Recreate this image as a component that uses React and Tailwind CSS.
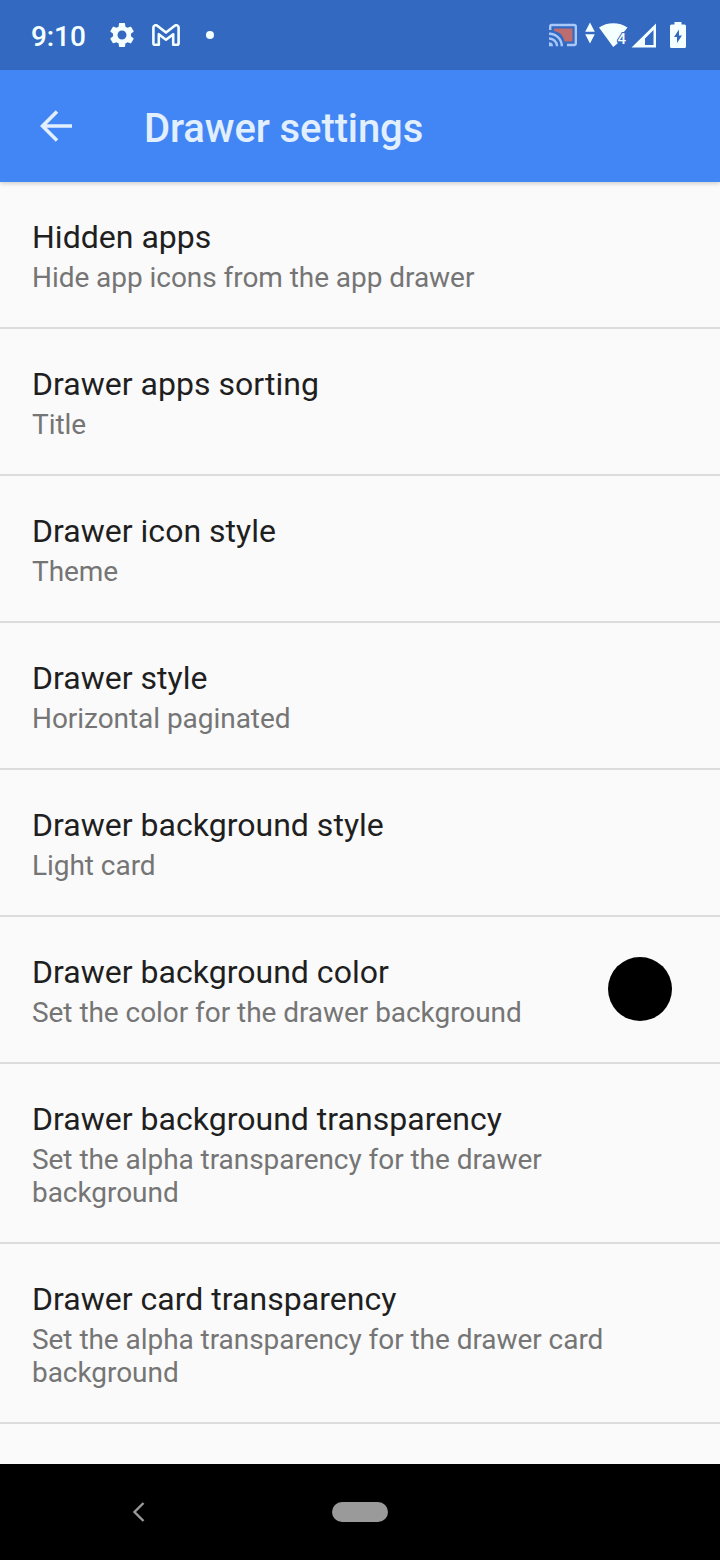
import React from "react";

const settings = [
  { title: "Hidden apps", summary: "Hide app icons from the app drawer" },
  { title: "Drawer apps sorting", summary: "Title" },
  { title: "Drawer icon style", summary: "Theme" },
  { title: "Drawer style", summary: "Horizontal paginated" },
  { title: "Drawer background style", summary: "Light card" },
  { title: "Drawer background color", summary: "Set the color for the drawer background", swatch: true },
  { title: "Drawer background transparency", summary: "Set the alpha transparency for the drawer background" },
  { title: "Drawer card transparency", summary: "Set the alpha transparency for the drawer card background" },
];

function StatusBar() {
  return (
    <div className="h-[70px] shrink-0 bg-[#3469c1] flex items-center justify-between pl-[31px] pr-[34px] text-[#f4ffff]">
      <div className="flex items-center">
        <span className="w-[76px] pt-1 text-[28px] leading-[34px] tracking-[-0.1px] font-medium">9:10</span>
        <svg className="w-[30px] h-[30px]" viewBox="0 0 24 24" fill="currentColor">
          <path d="M19.14 12.94c.04-.3.06-.61.06-.94 0-.32-.02-.64-.07-.94l2.03-1.58c.18-.14.23-.41.12-.61l-1.92-3.32c-.12-.22-.37-.29-.59-.22l-2.39.96c-.5-.38-1.03-.7-1.62-.94l-.36-2.54c-.04-.24-.24-.41-.48-.41h-3.84c-.24 0-.43.17-.47.41l-.36 2.54c-.59.24-1.13.57-1.62.94l-2.39-.96c-.22-.08-.47 0-.59.22L2.74 8.87c-.12.21-.08.47.12.61l2.03 1.58c-.05.3-.09.63-.09.94s.02.64.07.94l-2.03 1.58c-.18.14-.23.41-.12.61l1.92 3.32c.12.22.37.29.59.22l2.39-.96c.5.38 1.03.7 1.62.94l.36 2.54c.05.24.24.41.48.41h3.84c.24 0 .44-.17.47-.41l.36-2.54c.59-.24 1.13-.56 1.62-.94l2.39.96c.22.08.47 0 .59-.22l1.92-3.32c.12-.22.07-.47-.12-.61l-2.01-1.58zM12 15.6c-1.98 0-3.6-1.62-3.6-3.6s1.62-3.6 3.6-3.6 3.6 1.62 3.6 3.6-1.62 3.6-3.6 3.6z" />
        </svg>
        <svg className="w-[28px] h-[22px] ml-[15px]" viewBox="0 0 28 22" fill="none" stroke="currentColor" strokeWidth="2.6" strokeLinejoin="round">
          <path d="M1.4 3.6C1.4 1.2 3.8.6 5.6 2L14 8.600l8.400-6.600C24.200.6 26.600 1.200 26.600 3.600V19.200a1.500 1.500 0 0 1-1.500 1.500H21.200V10.200L14 15.700l-7.200-5.500v10.500H2.900a1.500 1.500 0 0 1-1.500-1.500z" />
        </svg>
        <div className="w-2 h-2 rounded-full bg-current ml-[26px]" />
      </div>

      <div className="flex items-center">
        <svg className="w-[28px] h-[24px]" viewBox="0 0 28 24">
          <path d="M5 5.500h18.500v13H15.500C14.500 12.500 10.500 8.800 5 8z" fill="#bd6c70" />
          <g fill="none" stroke="#a9c8fa" strokeWidth="2.400">
            <path d="M1.200 7V3.500A1.500 1.500 0 0 1 2.700 2h22.600a1.500 1.500 0 0 1 1.500 1.500v17a1.500 1.500 0 0 1-1.500 1.500H18" />
            <path d="M0 10.700A12.500 12.500 0 0 1 12.800 23.200M0 15.500A7.800 7.800 0 0 1 8 23.200" />
          </g>
          <path d="M0 19.300a4 4 0 0 1 4 4H0z" fill="#a9c8fa" />
        </svg>
        <svg className="w-[10px] h-[22px] ml-[7.500px] mr-[0.500px] mb-1" viewBox="0 0 10 22" fill="currentColor">
          <path d="M5 .5l4.800 9.300H.2zM5 21.500l-4.800-9.300h9.600z" />
        </svg>
        <svg className="w-[30px] h-[25px] ml-1" viewBox="0 0 30 25">
          <path d="M0 4.500C8-1.300 20.500-1.300 28.500 4.500L24.500 9.500 18.500 17v3.500L14.200 24z" fill="currentColor" />
          <text x="18.5" y="20.500" fontSize="15" fontWeight="500" fill="currentColor" stroke="#3469c1" strokeWidth="2" paintOrder="stroke">4</text>
        </svg>
        <svg className="w-[26px] h-[25px] ml-[2px]" viewBox="0 0 26 25" fill="currentColor" fillRule="evenodd">
          <path d="M25 .5V24.500H.5zM22.500 7L14 15.500V22h8.500z" />
        </svg>
        <svg className="w-[16px] h-[26px] ml-[13px]" viewBox="0 0 16 26">
          <path d="M4.500 0h7v2.500h3A1.500 1.500 0 0 1 16 4v20.500a1.500 1.500 0 0 1-1.500 1.500h-13A1.500 1.500 0 0 1 0 24.500V4a1.500 1.500 0 0 1 1.500-1.500h3z" fill="currentColor" />
          <path d="M9 7.500v6h3L7 21v-6H4z" fill="#3469c1" />
        </svg>
      </div>
    </div>
  );
}

function SettingRow({ item }) {
  return (
    <div className="flex items-center shrink-0 pl-8 pr-12 border-b-2 border-[#dcdcdc]">
      <div className="flex-1 pt-9 pb-[33px]">
        <div className="text-[32px] leading-[38px] tracking-[0.02px] text-[#1f1f1f]">{item.title}</div>
        <div className="mt-[5px] text-[28px] leading-[33px] tracking-[-0.05px] text-[#757575]">{item.summary}</div>
      </div>
      {item.swatch && <div className="w-16 h-16 mb-0.5 rounded-full bg-black" />}
    </div>
  );
}

export default function App() {
  return (
    <div className="w-[720px] h-[1560px] flex flex-col overflow-hidden bg-[#fafafa] font-['Roboto',sans-serif]">
      <StatusBar />

      <header className="h-28 shrink-0 flex items-center bg-[#4285f4] text-[#e1efff] pl-10 shadow-[0_2px_4px_rgba(0,0,0,0.16)]">
        <svg className="w-8 h-8" viewBox="0 0 32 32" fill="none" stroke="currentColor" strokeWidth="3.6">
          <path d="M32 16H3M17 1.500L2.500 16l14.500 14.500" />
        </svg>
        <h1 className="ml-[72px] pt-1.5 text-[40px] leading-[48px] tracking-[-0.1px] font-medium">Drawer settings</h1>
      </header>

      <main className="flex-1 min-h-0 flex flex-col overflow-hidden">
        {settings.map((item) => (
          <SettingRow key={item.title} item={item} />
        ))}
      </main>

      <nav className="h-24 shrink-0 bg-black flex items-center pl-[132px]">
        <svg className="w-[13px] h-5" viewBox="0 0 13 20" fill="none" stroke="#9a9a9a" strokeWidth="2.400">
          <path d="M11.500 1L2.500 10l9 9" />
        </svg>
        <div className="ml-[187px] w-14 h-5 rounded-full bg-[#9a9a9a]" />
      </nav>
    </div>
  );
}
